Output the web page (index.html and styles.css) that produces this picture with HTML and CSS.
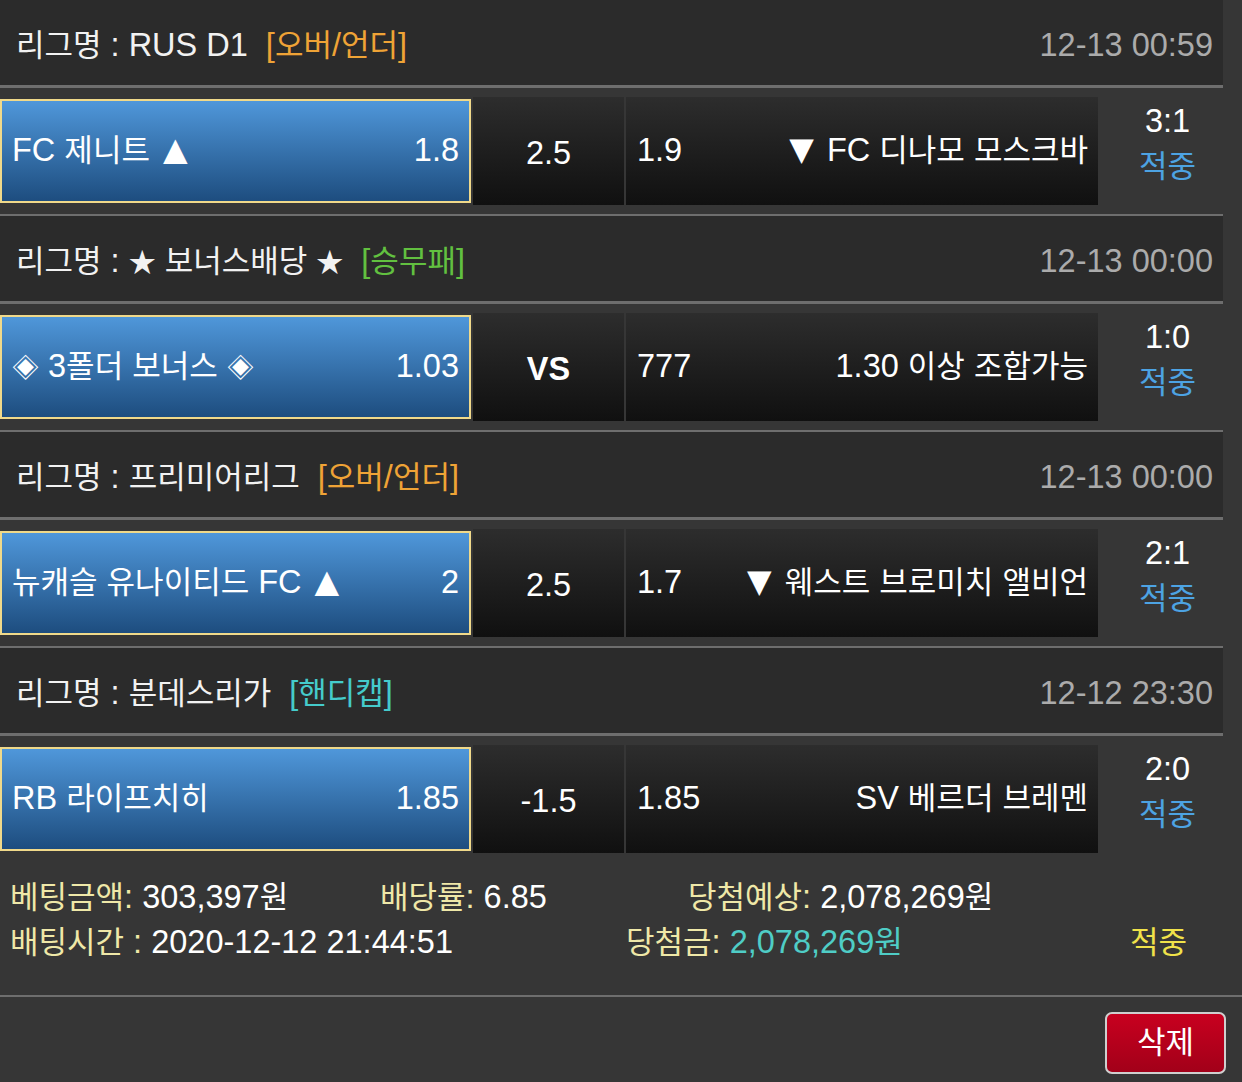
FILE: index.html
```html
<!DOCTYPE html>
<html lang="ko">
<head>
<meta charset="utf-8">
<title>베팅내역</title>
<link rel="stylesheet" href="styles.css">
</head>
<body>
<div class="list">
  <section class="block">
    <div class="league">
      <div class="league-name"><span class="k">리그명</span> : RUS D1<span class="tag orange">[<span class="k">오버</span>/<span class="k">언더</span>]</span></div>
      <div class="date">12-13 00:59</div>
    </div>
    <div class="match">
      <div class="home"><span>FC <span class="k">제니트</span> <span class="tri">▲</span></span><span>1.8</span></div>
      <div class="mid">2.5</div>
      <div class="away"><span>1.9</span><span><span class="tri">▼</span> FC <span class="k">디나모</span> <span class="k">모스크바</span></span></div>
      <div class="score"><div>3:1</div><div class="hit">적중</div></div>
    </div>
  </section>
  <section class="block">
    <div class="league">
      <div class="league-name"><span class="k">리그명</span> : <span class="sym">★</span> <span class="k">보너스배당</span> <span class="sym">★</span><span class="tag green">[<span class="k">승무패</span>]</span></div>
      <div class="date">12-13 00:00</div>
    </div>
    <div class="match">
      <div class="home"><span><span class="sym">◈</span> 3<span class="k">폴더</span> <span class="k">보너스</span> <span class="sym">◈</span></span><span>1.03</span></div>
      <div class="mid vs">VS</div>
      <div class="away"><span>777</span><span>1.30 <span class="k">이상</span> <span class="k">조합가능</span></span></div>
      <div class="score"><div>1:0</div><div class="hit">적중</div></div>
    </div>
  </section>
  <section class="block">
    <div class="league">
      <div class="league-name"><span class="k">리그명</span> : <span class="k">프리미어리그</span><span class="tag orange">[<span class="k">오버</span>/<span class="k">언더</span>]</span></div>
      <div class="date">12-13 00:00</div>
    </div>
    <div class="match">
      <div class="home"><span><span class="k">뉴캐슬</span> <span class="k">유나이티드</span> FC <span class="tri">▲</span></span><span>2</span></div>
      <div class="mid">2.5</div>
      <div class="away"><span>1.7</span><span><span class="tri">▼</span> <span class="k">웨스트</span> <span class="k">브로미치</span> <span class="k">앨비언</span></span></div>
      <div class="score"><div>2:1</div><div class="hit">적중</div></div>
    </div>
  </section>
  <section class="block">
    <div class="league">
      <div class="league-name"><span class="k">리그명</span> : <span class="k">분데스리가</span><span class="tag cyan">[<span class="k">핸디캡</span>]</span></div>
      <div class="date">12-12 23:30</div>
    </div>
    <div class="match">
      <div class="home"><span>RB <span class="k">라이프치히</span></span><span>1.85</span></div>
      <div class="mid">-1.5</div>
      <div class="away"><span>1.85</span><span>SV <span class="k">베르더</span> <span class="k">브레멘</span></span></div>
      <div class="score"><div>2:0</div><div class="hit">적중</div></div>
    </div>
  </section>
</div>
<div class="footer">
  <div class="frow">
    <div class="c1"><span class="lbl"><span class="k">베팅금액</span>:</span> 303,397<span class="k">원</span></div>
    <div class="c2"><span class="lbl"><span class="k">배당률</span>:</span> 6.85</div>
    <div><span class="lbl"><span class="k">당첨예상</span>:</span> 2,078,269<span class="k">원</span></div>
  </div>
  <div class="frow">
    <div class="d1"><span class="lbl"><span class="k">배팅시간</span> :</span> 2020-12-12 21:44:51</div>
    <div class="d2"><span class="lbl"><span class="k">당첨금</span>:</span> <span class="win">2,078,269<span class="k">원</span></span></div>
    <div class="result">적중</div>
  </div>
</div>
<div class="actions">
  <div class="del">삭제</div>
</div>
</body>
</html>
```

FILE: styles.css
```css
body {
  margin: 0;
  background: #363636;
  color: #ffffff;
  font-family: "Liberation Sans", "Noto Sans CJK KR", sans-serif;
  font-size: 32.5px;
  line-height: 40px;
}

.k {
  font-size: 31px;
  line-height: 1;
}

.tri {
  font-family: "DejaVu Sans", sans-serif;
  font-size: 32px;
  line-height: 1;
  vertical-align: 1px;
  margin-left: 4px;
}

.sym {
  font-family: "Noto Sans CJK KR", sans-serif;
  font-size: 27px;
  line-height: 1;
}

.list {
  width: 1223px;
  margin-top: -2px;
}

.league {
  height: 81px;
  padding: 4px 10px 0 16px;
  background: #2b2b2b;
  border-top: 2px solid #6e6e6e;
  border-bottom: 3px solid #6e6e6e;
  display: flex;
  align-items: center;
  justify-content: space-between;
}

.league-name {
  color: #f2f2f2;
}

.tag {
  margin-left: 18px;
}

.orange { color: #efa336; }
.green { color: #62c040; }
.cyan { color: #45cbcb; }

.date {
  color: #ababab;
}

.match {
  height: 126px;
  display: flex;
  align-items: center;
  gap: 2px;
}

.home {
  width: 471px;
  height: 104px;
  box-sizing: border-box;
  border: 2px solid #f0d98a;
  background: linear-gradient(#4f97da, #1d4d7f);
  display: flex;
  align-items: center;
  justify-content: space-between;
  padding: 0 10px 2px;
}

.mid {
  width: 151px;
  height: 108px;
  box-sizing: border-box;
  padding-top: 4px;
  background: linear-gradient(#2d2d2d, #101010);
  display: flex;
  align-items: center;
  justify-content: center;
}

.vs {
  font-weight: bold;
}

.away {
  width: 472px;
  height: 108px;
  box-sizing: border-box;
  background: linear-gradient(#2d2d2d, #101010);
  display: flex;
  align-items: center;
  justify-content: space-between;
  padding: 0 10px 2px 11px;
}

.away .tri {
  margin: 0 4px 0 0;
}

.score {
  flex: 1;
  align-self: flex-start;
  padding: 11px 0 0 12px;
  text-align: center;
  line-height: 45px;
}

.hit {
  color: #4da3e3;
  font-size: 31px;
}

.footer {
  height: 135px;
  box-sizing: border-box;
  padding-top: 13px;
  border-bottom: 2px solid #6e6e6e;
}

.frow {
  display: flex;
  line-height: 45px;
  padding-left: 10px;
}

.c1 { width: 370px; }
.c2 { width: 308px; }
.d1 { width: 616px; }
.d2 { width: 504px; }

.lbl {
  color: #efe8a8;
}

.win {
  color: #4fcdc6;
}

.result {
  color: #f0e24a;
  font-size: 31px;
}

.actions {
  display: flex;
  justify-content: flex-end;
  padding: 15px 16px 0 0;
}

.del {
  width: 121px;
  height: 62px;
  box-sizing: border-box;
  border: 2px solid #cfcfcf;
  border-radius: 7px;
  background: linear-gradient(#c8001f, #a20019);
  color: #ffffff;
  font-size: 31px;
  display: flex;
  align-items: center;
  justify-content: center;
}
```
